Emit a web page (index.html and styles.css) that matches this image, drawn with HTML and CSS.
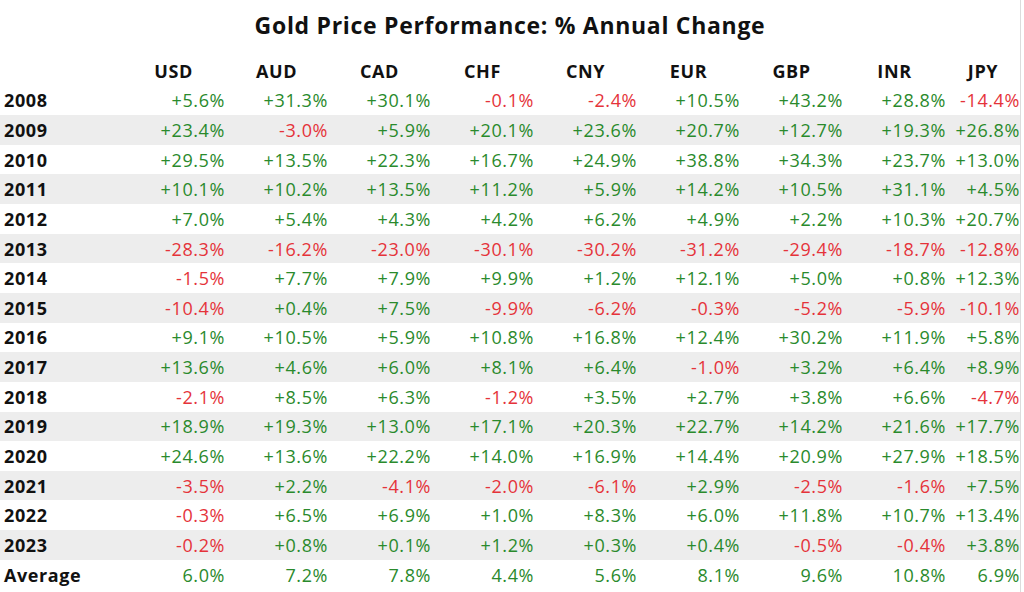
FILE: index.html
```html
<!DOCTYPE html>
<html>
<head>
<meta charset="utf-8">
<link rel="stylesheet" href="styles.css">
</head>
<body>
<div class="sheet">
  <h1 class="title">Gold Price Performance: % Annual Change</h1>
  <table class="grid">
    <colgroup>
      <col class="c-year"><col class="c-val"><col class="c-val"><col class="c-val"><col class="c-val"><col class="c-val"><col class="c-val"><col class="c-val"><col class="c-val"><col class="c-last">
    </colgroup>
    <thead>
      <tr><th></th><th>USD</th><th>AUD</th><th>CAD</th><th>CHF</th><th>CNY</th><th>EUR</th><th>GBP</th><th>INR</th><th>JPY</th></tr>
    </thead>
    <tbody>
      <tr><th>2008</th><td class="up">+5.6%</td><td class="up">+31.3%</td><td class="up">+30.1%</td><td class="dn">-0.1%</td><td class="dn">-2.4%</td><td class="up">+10.5%</td><td class="up">+43.2%</td><td class="up">+28.8%</td><td class="dn">-14.4%</td></tr>
      <tr class="alt"><th>2009</th><td class="up">+23.4%</td><td class="dn">-3.0%</td><td class="up">+5.9%</td><td class="up">+20.1%</td><td class="up">+23.6%</td><td class="up">+20.7%</td><td class="up">+12.7%</td><td class="up">+19.3%</td><td class="up">+26.8%</td></tr>
      <tr><th>2010</th><td class="up">+29.5%</td><td class="up">+13.5%</td><td class="up">+22.3%</td><td class="up">+16.7%</td><td class="up">+24.9%</td><td class="up">+38.8%</td><td class="up">+34.3%</td><td class="up">+23.7%</td><td class="up">+13.0%</td></tr>
      <tr class="alt"><th>2011</th><td class="up">+10.1%</td><td class="up">+10.2%</td><td class="up">+13.5%</td><td class="up">+11.2%</td><td class="up">+5.9%</td><td class="up">+14.2%</td><td class="up">+10.5%</td><td class="up">+31.1%</td><td class="up">+4.5%</td></tr>
      <tr><th>2012</th><td class="up">+7.0%</td><td class="up">+5.4%</td><td class="up">+4.3%</td><td class="up">+4.2%</td><td class="up">+6.2%</td><td class="up">+4.9%</td><td class="up">+2.2%</td><td class="up">+10.3%</td><td class="up">+20.7%</td></tr>
      <tr class="alt"><th>2013</th><td class="dn">-28.3%</td><td class="dn">-16.2%</td><td class="dn">-23.0%</td><td class="dn">-30.1%</td><td class="dn">-30.2%</td><td class="dn">-31.2%</td><td class="dn">-29.4%</td><td class="dn">-18.7%</td><td class="dn">-12.8%</td></tr>
      <tr><th>2014</th><td class="dn">-1.5%</td><td class="up">+7.7%</td><td class="up">+7.9%</td><td class="up">+9.9%</td><td class="up">+1.2%</td><td class="up">+12.1%</td><td class="up">+5.0%</td><td class="up">+0.8%</td><td class="up">+12.3%</td></tr>
      <tr class="alt"><th>2015</th><td class="dn">-10.4%</td><td class="up">+0.4%</td><td class="up">+7.5%</td><td class="dn">-9.9%</td><td class="dn">-6.2%</td><td class="dn">-0.3%</td><td class="dn">-5.2%</td><td class="dn">-5.9%</td><td class="dn">-10.1%</td></tr>
      <tr><th>2016</th><td class="up">+9.1%</td><td class="up">+10.5%</td><td class="up">+5.9%</td><td class="up">+10.8%</td><td class="up">+16.8%</td><td class="up">+12.4%</td><td class="up">+30.2%</td><td class="up">+11.9%</td><td class="up">+5.8%</td></tr>
      <tr class="alt"><th>2017</th><td class="up">+13.6%</td><td class="up">+4.6%</td><td class="up">+6.0%</td><td class="up">+8.1%</td><td class="up">+6.4%</td><td class="dn">-1.0%</td><td class="up">+3.2%</td><td class="up">+6.4%</td><td class="up">+8.9%</td></tr>
      <tr><th>2018</th><td class="dn">-2.1%</td><td class="up">+8.5%</td><td class="up">+6.3%</td><td class="dn">-1.2%</td><td class="up">+3.5%</td><td class="up">+2.7%</td><td class="up">+3.8%</td><td class="up">+6.6%</td><td class="dn">-4.7%</td></tr>
      <tr class="alt"><th>2019</th><td class="up">+18.9%</td><td class="up">+19.3%</td><td class="up">+13.0%</td><td class="up">+17.1%</td><td class="up">+20.3%</td><td class="up">+22.7%</td><td class="up">+14.2%</td><td class="up">+21.6%</td><td class="up">+17.7%</td></tr>
      <tr><th>2020</th><td class="up">+24.6%</td><td class="up">+13.6%</td><td class="up">+22.2%</td><td class="up">+14.0%</td><td class="up">+16.9%</td><td class="up">+14.4%</td><td class="up">+20.9%</td><td class="up">+27.9%</td><td class="up">+18.5%</td></tr>
      <tr class="alt"><th>2021</th><td class="dn">-3.5%</td><td class="up">+2.2%</td><td class="dn">-4.1%</td><td class="dn">-2.0%</td><td class="dn">-6.1%</td><td class="up">+2.9%</td><td class="dn">-2.5%</td><td class="dn">-1.6%</td><td class="up">+7.5%</td></tr>
      <tr><th>2022</th><td class="dn">-0.3%</td><td class="up">+6.5%</td><td class="up">+6.9%</td><td class="up">+1.0%</td><td class="up">+8.3%</td><td class="up">+6.0%</td><td class="up">+11.8%</td><td class="up">+10.7%</td><td class="up">+13.4%</td></tr>
      <tr class="alt"><th>2023</th><td class="dn">-0.2%</td><td class="up">+0.8%</td><td class="up">+0.1%</td><td class="up">+1.2%</td><td class="up">+0.3%</td><td class="up">+0.4%</td><td class="dn">-0.5%</td><td class="dn">-0.4%</td><td class="up">+3.8%</td></tr>
      <tr><th>Average</th><td class="up">6.0%</td><td class="up">7.2%</td><td class="up">7.8%</td><td class="up">4.4%</td><td class="up">5.6%</td><td class="up">8.1%</td><td class="up">9.6%</td><td class="up">10.8%</td><td class="up">6.9%</td></tr>
    </tbody>
  </table>
</div>
</body>
</html>
```

FILE: styles.css
```css
html, body {
  margin: 0;
  padding: 0;
  background: #ffffff;
}
body {
  font-family: "Open Sans", "Noto Sans", sans-serif;
  color: #111111;
}
.sheet {
  width: 1020px;
  height: 592px;
  border-right: 1px solid #dcdcdc;
}
.title {
  margin: 0;
  height: 56px;
  box-sizing: border-box;
  padding-top: 8px;
  text-align: center;
  font-size: 23px;
  letter-spacing: 0.7px;
  font-weight: 700;
  line-height: 34px;
  color: #111111;
}
.grid {
  width: 1020px;
  border-collapse: collapse;
  table-layout: fixed;
  font-size: 18px;
  letter-spacing: 0.6px;
}
.c-year { width: 122px; }
.c-val { width: 103px; }
.c-last { width: 74px; }
.grid th, .grid td {
  padding: 0;
  height: 29.65px;
  line-height: 20px;
  white-space: nowrap;
}
.grid thead th {
  text-align: center;
  font-weight: 700;
  height: 29.5px;
}
.grid tbody th {
  text-align: left;
  padding-left: 4px;
  font-weight: 700;
}
.grid td {
  text-align: right;
}
.grid tr.alt {
  background: #ededed;
}
.up { color: #2a8a2c; }
.dn { color: #e5333a; }
```
